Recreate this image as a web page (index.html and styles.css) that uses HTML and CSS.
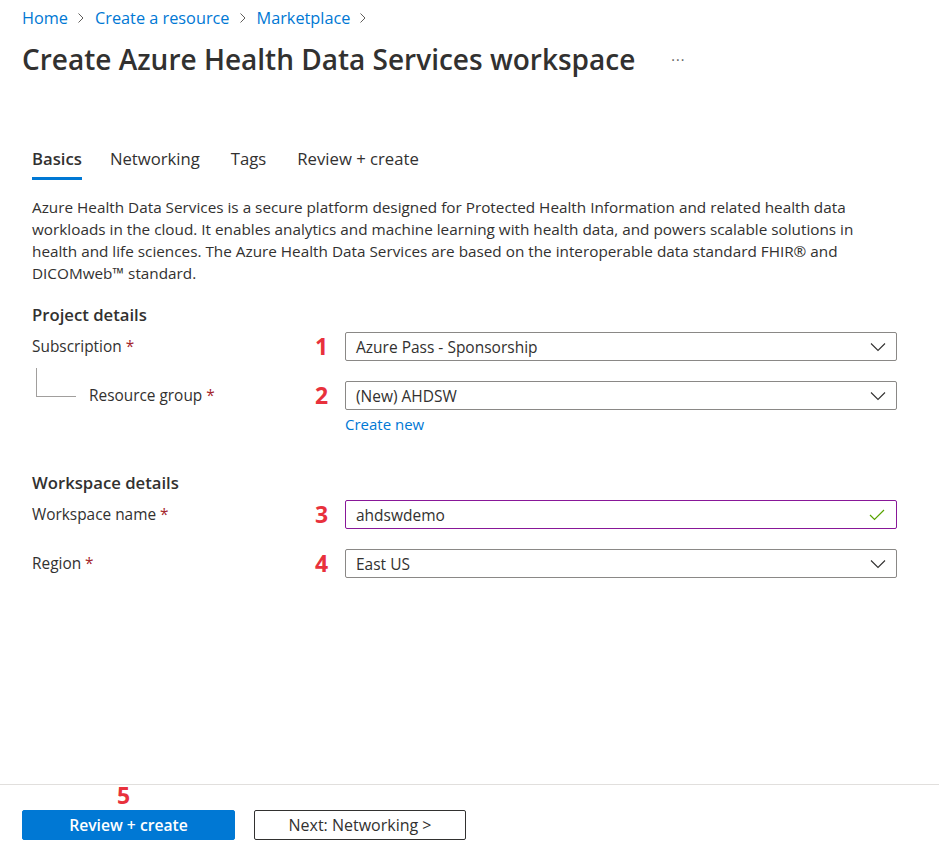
FILE: index.html
```html
<!DOCTYPE html>
<html lang="en">
<head>
<meta charset="utf-8">
<title>Create Azure Health Data Services workspace</title>
<link rel="stylesheet" href="styles.css">
</head>
<body>
<div class="page">
  <main class="main">
    <nav class="breadcrumb">
      <a class="crumb" href="#">Home</a>
      <svg class="sep" width="8" height="12" viewBox="0 0 8 12"><path d="M1.5 1.5 L6 6 L1.5 10.5" fill="none" stroke="#605e5c" stroke-width="1"/></svg>
      <a class="crumb" href="#">Create a resource</a>
      <svg class="sep" width="8" height="12" viewBox="0 0 8 12"><path d="M1.5 1.5 L6 6 L1.5 10.5" fill="none" stroke="#605e5c" stroke-width="1"/></svg>
      <a class="crumb" href="#">Marketplace</a>
      <svg class="sep" width="8" height="12" viewBox="0 0 8 12"><path d="M1.5 1.5 L6 6 L1.5 10.5" fill="none" stroke="#605e5c" stroke-width="1"/></svg>
    </nav>
    <div class="title-row">
      <h1 class="title">Create Azure Health Data Services workspace</h1>
      <span class="more">···</span>
    </div>

    <div class="content">
      <div class="tabs">
        <span class="tab active">Basics</span>
        <span class="tab">Networking</span>
        <span class="tab">Tags</span>
        <span class="tab">Review + create</span>
      </div>

      <p class="desc">Azure Health Data Services is a secure platform designed for Protected Health Information and related health data workloads in the cloud. It enables analytics and machine learning with health data, and powers scalable solutions in health and life sciences. The Azure Health Data Services are based on the interoperable data standard FHIR® and DICOMweb™ standard.</p>

      <h2 class="section">Project details</h2>

      <div class="row">
        <div class="label">Subscription <span class="req">*</span></div>
        <div class="num">1</div>
        <div class="field select">
          <span class="value">Azure Pass - Sponsorship</span>
          <svg class="chev" width="16" height="10" viewBox="0 0 16 10"><path d="M1 1.5 L8 8.5 L15 1.5" fill="none" stroke="#323130" stroke-width="1.1"/></svg>
        </div>
      </div>

      <div class="row row-gap">
        <div class="label nested"><span class="tree"></span>Resource group <span class="req">*</span></div>
        <div class="num">2</div>
        <div class="field select">
          <span class="value">(New) AHDSW</span>
          <svg class="chev" width="16" height="10" viewBox="0 0 16 10"><path d="M1 1.5 L8 8.5 L15 1.5" fill="none" stroke="#323130" stroke-width="1.1"/></svg>
        </div>
      </div>
      <div class="row-link">
        <a class="link" href="#">Create new</a>
      </div>

      <h2 class="section section-2">Workspace details</h2>

      <div class="row">
        <div class="label">Workspace name <span class="req">*</span></div>
        <div class="num">3</div>
        <div class="field text valid">
          <span class="value">ahdswdemo</span>
          <svg class="check" width="16" height="12" viewBox="0 0 16 12"><path d="M1 6 L5.5 10.5 L15 1" fill="none" stroke="#57a300" stroke-width="1.2"/></svg>
        </div>
      </div>

      <div class="row row-gap">
        <div class="label">Region <span class="req">*</span></div>
        <div class="num">4</div>
        <div class="field select">
          <span class="value">East US</span>
          <svg class="chev" width="16" height="10" viewBox="0 0 16 10"><path d="M1 1.5 L8 8.5 L15 1.5" fill="none" stroke="#323130" stroke-width="1.1"/></svg>
        </div>
      </div>
    </div>
  </main>

  <footer class="footer">
    <div class="btn-wrap">
      <span class="num-five">5</span>
      <button class="btn primary">Review + create</button>
    </div>
    <button class="btn secondary">Next: Networking &gt;</button>
  </footer>
</div>
</body>
</html>
```

FILE: styles.css
```css
* { box-sizing: border-box; }

html, body {
  margin: 0;
  padding: 0;
  background: #ffffff;
}

body {
  font-family: "Open Sans", "Noto Sans", "Liberation Sans", sans-serif;
  color: #323130;
}

.page {
  min-height: 868px;
  display: flex;
  flex-direction: column;
}

.main {
  flex: 1;
  padding: 8px 22px 0 22px;
}

.breadcrumb {
  display: flex;
  align-items: center;
  height: 20px;
  font-size: 16.3px;
}

.crumb {
  color: #0078d4;
  text-decoration: none;
}

.sep {
  margin: 0 10px 0 9px;
}

.title-row {
  display: flex;
  align-items: center;
  margin-top: 13px;
  height: 36px;
}

.title {
  margin: 0;
  font-size: 28px;
  font-weight: 600;
  line-height: 36px;
  color: #323130;
}

.more {
  margin-left: 36px;
  font-size: 14px;
  color: #605e5c;
  letter-spacing: 1px;
}

.content {
  padding-left: 10px;
}

.tabs {
  display: flex;
  gap: 31px;
  margin-top: 71px;
}

.tab {
  font-size: 16.7px;
  line-height: 22px;
  padding-bottom: 7px;
  border-bottom: 3px solid transparent;
  color: #323130;
}

.tab.active {
  font-weight: 600;
  border-bottom-color: #0078d4;
  margin-right: -3px;
}

.desc {
  margin: 16px 0 0 0;
  width: 840px;
  font-size: 15.3px;
  line-height: 22px;
}

.section {
  margin: 20px 0 0 0;
  font-size: 16.7px;
  font-weight: 600;
  line-height: 22px;
}

.section-2 {
  margin-top: 37px;
}

.row {
  display: flex;
  align-items: center;
  margin-top: 6px;
}

.row-gap {
  margin-top: 20px;
}

.label {
  width: 270px;
  font-size: 15.4px;
  position: relative;
}

.label.nested {
  padding-left: 57px;
}

.tree {
  position: absolute;
  left: 4px;
  top: -17px;
  width: 40px;
  height: 29px;
  border-left: 1px solid #a19f9d;
  border-bottom: 1px solid #a19f9d;
}

.req {
  color: #a4262c;
}

.num {
  width: 43px;
  padding-right: 4px;
  text-align: center;
  font-family: "Noto Sans", "Open Sans", sans-serif;
  font-weight: 700;
  font-size: 23px;
  line-height: 29px;
  color: #e8313c;
}

.field {
  width: 552px;
  height: 29px;
  border: 1px solid #8a8886;
  border-radius: 2px;
  display: flex;
  align-items: center;
  justify-content: space-between;
  padding: 0 10px 0 10px;
  font-size: 15.5px;
}

.field.valid {
  border-color: #881798;
}

.check {
  margin-right: 1px;
}

.row-link {
  padding-left: 313px;
  margin-top: 3px;
  line-height: 22px;
}

.link {
  color: #0078d4;
  text-decoration: none;
  font-size: 15px;
}

.footer {
  border-top: 1px solid #e1dfdd;
  padding: 25px 22px 28px 22px;
  display: flex;
  gap: 19px;
}

.btn-wrap {
  position: relative;
}

.num-five {
  position: absolute;
  left: 95px;
  top: -28px;
  font-family: "Noto Sans", "Open Sans", sans-serif;
  font-weight: 700;
  font-size: 23px;
  line-height: 26px;
  color: #e8313c;
}

.btn {
  height: 30px;
  width: 213px;
  border-radius: 2px;
  font-family: "Open Sans", "Noto Sans", sans-serif;
  font-size: 15.7px;
  cursor: pointer;
  padding: 0;
}

.btn.primary {
  background: #0078d4;
  border: 1px solid #0078d4;
  color: #ffffff;
  font-weight: 600;
}

.btn.secondary {
  width: 212px;
  background: #ffffff;
  border: 1px solid #323130;
  color: #323130;
  font-size: 16px;
}
```
